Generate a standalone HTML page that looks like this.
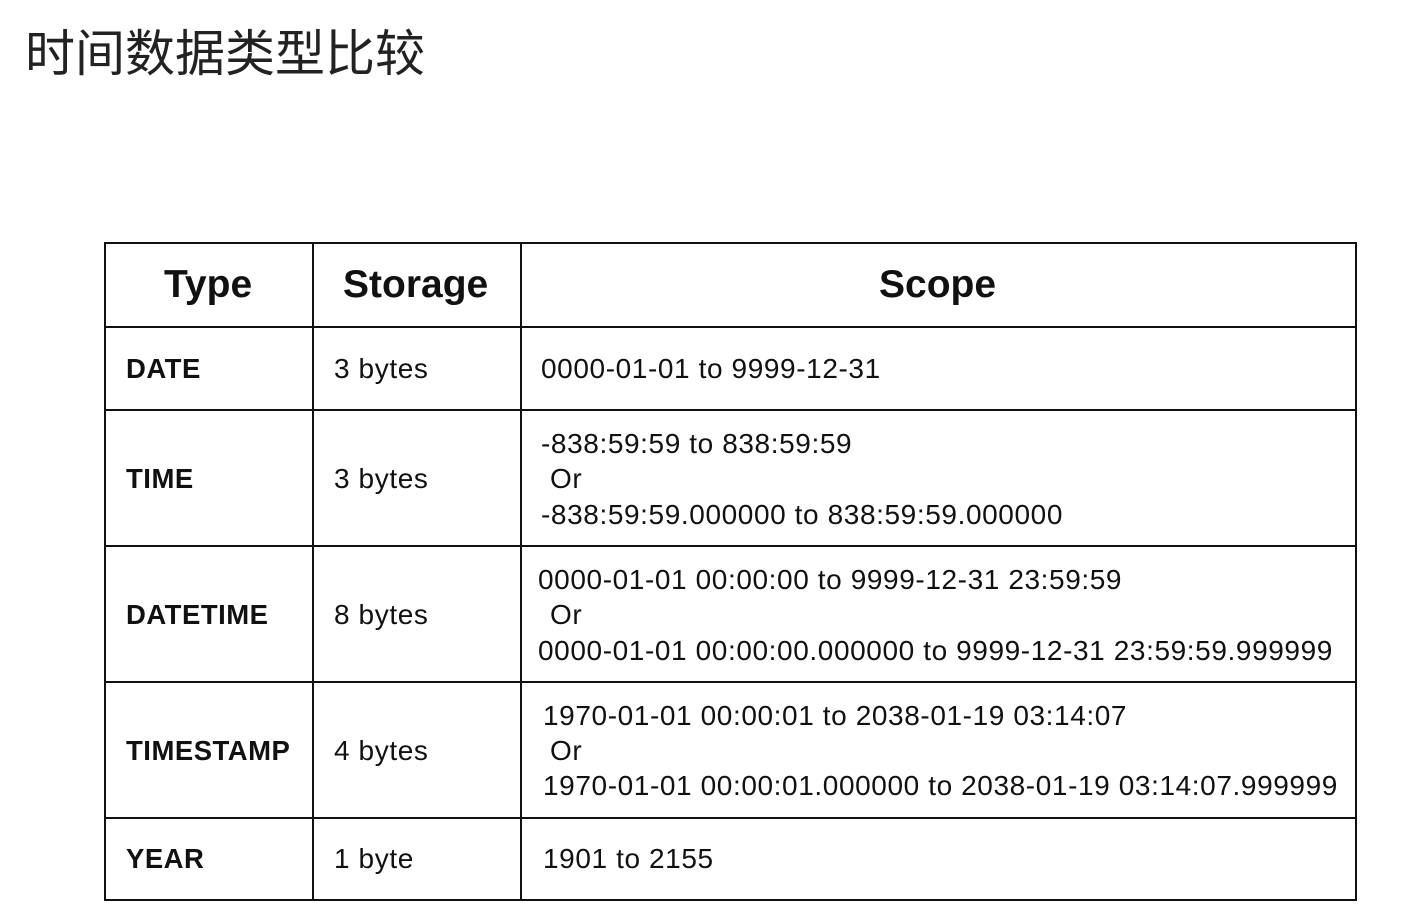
<!DOCTYPE html>
<html><head><meta charset="utf-8"><style>
body{margin:0;width:1416px;height:917px;background:#fff;position:relative;overflow:hidden;font-family:"Liberation Sans",Arial,sans-serif;color:#111}
.t{position:absolute;white-space:nowrap;line-height:1}
.h{font-weight:bold;font-size:39px}
.b{font-weight:bold;font-size:27.5px;letter-spacing:0.5px}
.n{font-size:28px;letter-spacing:0.6px}
.l{position:absolute;background:#111}
</style></head><body>
<div class="t" style="left:25px;top:29px;font-size:50px;font-family:'Liberation Sans','Noto Sans CJK SC',sans-serif;color:#222">时间数据类型比较</div>
<div class="l" style="left:104px;top:242px;width:1253px;height:2px"></div>
<div class="l" style="left:104px;top:326px;width:1253px;height:2px"></div>
<div class="l" style="left:104px;top:409px;width:1253px;height:2px"></div>
<div class="l" style="left:104px;top:545px;width:1253px;height:2px"></div>
<div class="l" style="left:104px;top:681px;width:1253px;height:2px"></div>
<div class="l" style="left:104px;top:817px;width:1253px;height:2px"></div>
<div class="l" style="left:104px;top:899px;width:1253px;height:2px"></div>
<div class="l" style="left:104px;top:242px;width:2px;height:659px"></div>
<div class="l" style="left:312px;top:242px;width:2px;height:659px"></div>
<div class="l" style="left:520px;top:242px;width:2px;height:659px"></div>
<div class="l" style="left:1355px;top:242px;width:2px;height:659px"></div>

<div class="t h" style="left:164px;top:265px">Type</div>
<div class="t h" style="left:343px;top:265px">Storage</div>
<div class="t h" style="left:879px;top:265px">Scope</div>

<div class="t b" style="left:126px;top:355px">DATE</div>
<div class="t n" style="left:334px;top:355px">3 bytes</div>
<div class="t n" style="left:541px;top:355px">0000-01-01 to 9999-12-31</div>

<div class="t b" style="left:126px;top:465px">TIME</div>
<div class="t n" style="left:334px;top:465px">3 bytes</div>
<div class="t n" style="left:541px;top:430px">-838:59:59 to 838:59:59</div>
<div class="t n" style="left:550px;top:465px">Or</div>
<div class="t n" style="left:541px;top:501px">-838:59:59.000000 to 838:59:59.000000</div>

<div class="t b" style="left:126px;top:601px">DATETIME</div>
<div class="t n" style="left:334px;top:601px">8 bytes</div>
<div class="t n" style="left:538px;top:566px">0000-01-01 00:00:00 to 9999-12-31 23:59:59</div>
<div class="t n" style="left:550px;top:601px">Or</div>
<div class="t n" style="left:538px;top:637px">0000-01-01 00:00:00.000000 to 9999-12-31 23:59:59.999999</div>

<div class="t b" style="left:126px;top:737px">TIMESTAMP</div>
<div class="t n" style="left:334px;top:737px">4 bytes</div>
<div class="t n" style="left:543px;top:702px">1970-01-01 00:00:01 to 2038-01-19 03:14:07</div>
<div class="t n" style="left:550px;top:737px">Or</div>
<div class="t n" style="left:543px;top:772px">1970-01-01 00:00:01.000000 to 2038-01-19 03:14:07.999999</div>

<div class="t b" style="left:126px;top:845px">YEAR</div>
<div class="t n" style="left:334px;top:845px">1 byte</div>
<div class="t n" style="left:543px;top:845px">1901 to 2155</div>
</body></html>
